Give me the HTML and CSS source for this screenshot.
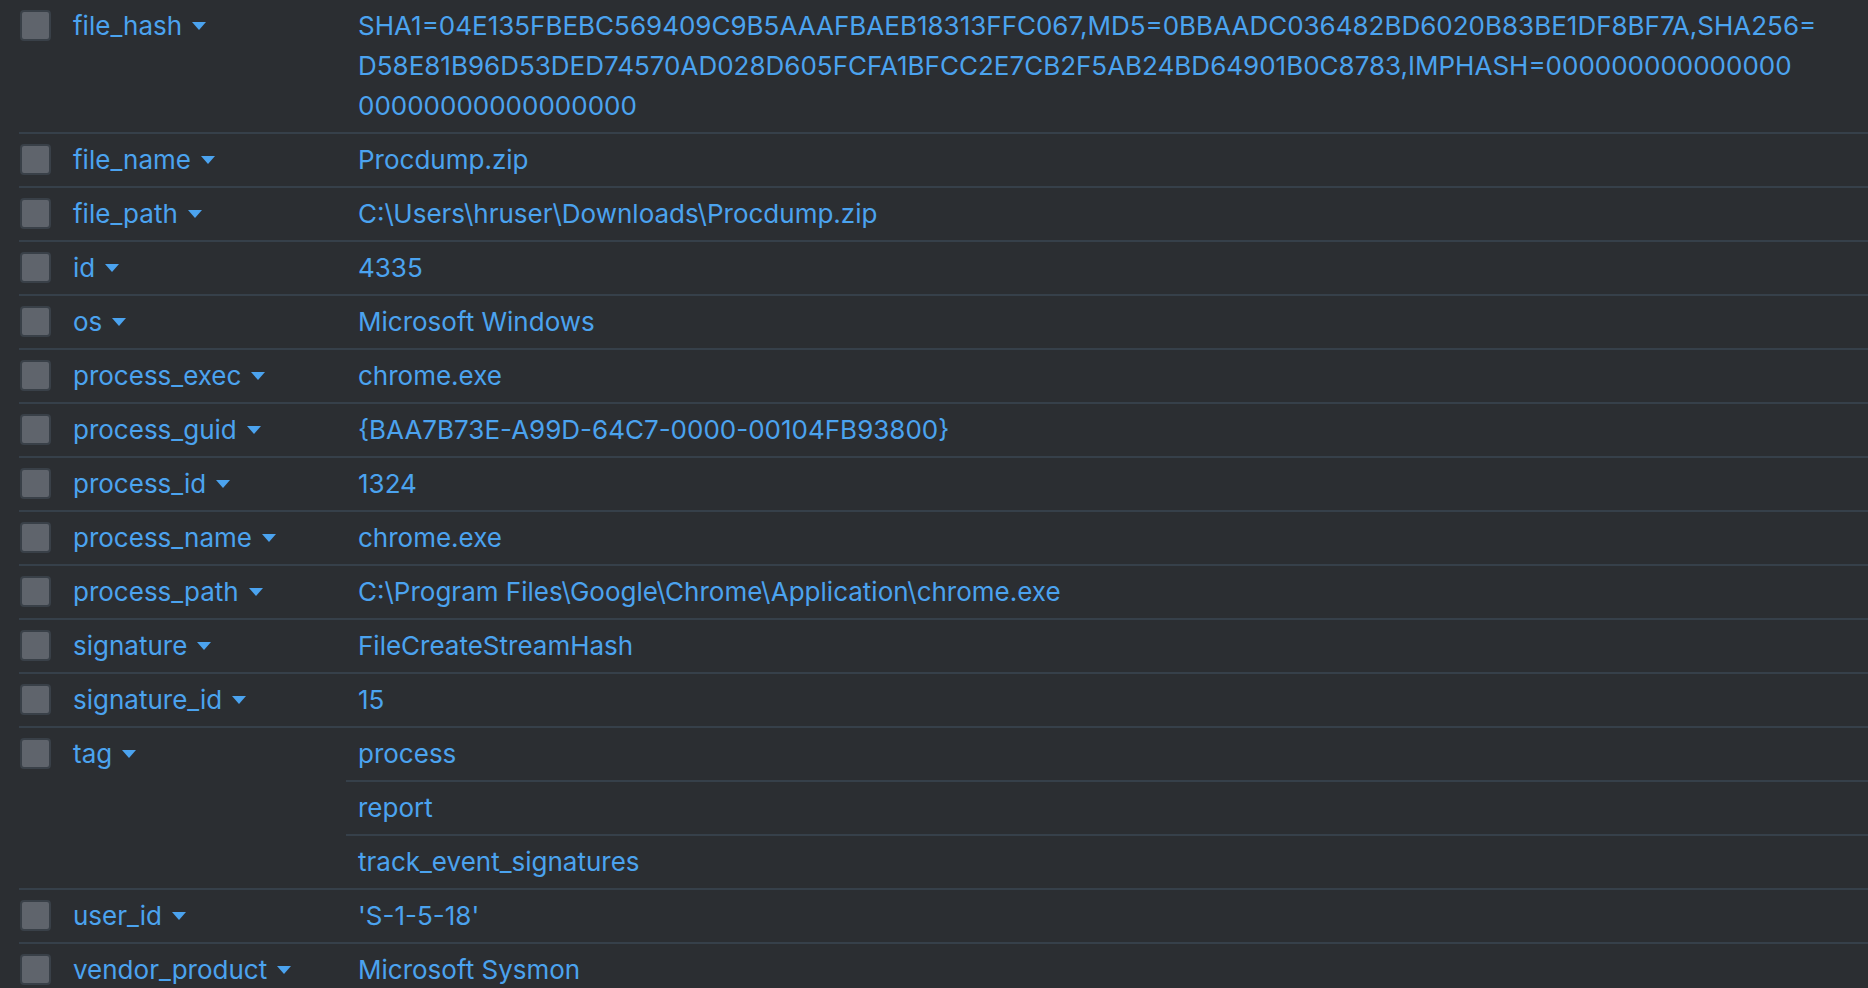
FILE: index.html
```html
<!DOCTYPE html>
<html>
<head>
<meta charset="utf-8">
<link rel="stylesheet" href="styles.css">
</head>
<body>
<div class="fields">
  <div class="row">
    <div class="key"><span class="cb"></span><span class="name">file_hash</span><span class="caret"></span></div>
    <div class="vals"><div class="val hash">SHA1=04E135FBEBC569409C9B5AAAFBAEB18313FFC067,MD5=0BBAADC036482BD6020B83BE1DF8BF7A,SHA256=<br>D58E81B96D53DED74570AD028D605FCFA1BFCC2E7CB2F5AB24BD64901B0C8783,IMPHASH=000000000000000<br>00000000000000000</div></div>
  </div>
  <div class="row">
    <div class="key"><span class="cb"></span><span class="name">file_name</span><span class="caret"></span></div>
    <div class="vals"><div class="val">Procdump.zip</div></div>
  </div>
  <div class="row">
    <div class="key"><span class="cb"></span><span class="name">file_path</span><span class="caret"></span></div>
    <div class="vals"><div class="val">C:\Users\hruser\Downloads\Procdump.zip</div></div>
  </div>
  <div class="row">
    <div class="key"><span class="cb"></span><span class="name">id</span><span class="caret"></span></div>
    <div class="vals"><div class="val">4335</div></div>
  </div>
  <div class="row">
    <div class="key"><span class="cb"></span><span class="name">os</span><span class="caret"></span></div>
    <div class="vals"><div class="val">Microsoft Windows</div></div>
  </div>
  <div class="row">
    <div class="key"><span class="cb"></span><span class="name">process_exec</span><span class="caret"></span></div>
    <div class="vals"><div class="val">chrome.exe</div></div>
  </div>
  <div class="row">
    <div class="key"><span class="cb"></span><span class="name">process_guid</span><span class="caret"></span></div>
    <div class="vals"><div class="val">{BAA7B73E-A99D-64C7-0000-00104FB93800}</div></div>
  </div>
  <div class="row">
    <div class="key"><span class="cb"></span><span class="name">process_id</span><span class="caret"></span></div>
    <div class="vals"><div class="val">1324</div></div>
  </div>
  <div class="row">
    <div class="key"><span class="cb"></span><span class="name">process_name</span><span class="caret"></span></div>
    <div class="vals"><div class="val">chrome.exe</div></div>
  </div>
  <div class="row">
    <div class="key"><span class="cb"></span><span class="name">process_path</span><span class="caret"></span></div>
    <div class="vals"><div class="val">C:\Program Files\Google\Chrome\Application\chrome.exe</div></div>
  </div>
  <div class="row">
    <div class="key"><span class="cb"></span><span class="name">signature</span><span class="caret"></span></div>
    <div class="vals"><div class="val">FileCreateStreamHash</div></div>
  </div>
  <div class="row">
    <div class="key"><span class="cb"></span><span class="name">signature_id</span><span class="caret"></span></div>
    <div class="vals"><div class="val">15</div></div>
  </div>
  <div class="row">
    <div class="key"><span class="cb"></span><span class="name">tag</span><span class="caret"></span></div>
    <div class="vals"><div class="val">process</div><div class="val">report</div><div class="val">track_event_signatures</div></div>
  </div>
  <div class="row">
    <div class="key"><span class="cb"></span><span class="name">user_id</span><span class="caret"></span></div>
    <div class="vals"><div class="val">'S-1-5-18'</div></div>
  </div>
  <div class="row">
    <div class="key"><span class="cb"></span><span class="name">vendor_product</span><span class="caret"></span></div>
    <div class="vals"><div class="val">Microsoft Sysmon</div></div>
  </div>
</div>
</body>
</html>
```
FILE: styles.css
```css
html, body {
  margin: 0;
  padding: 0;
  background: #2b2e32;
  height: 100%;
  overflow: hidden;
}
body {
  font-family: "Inter", "Liberation Sans", sans-serif;
  font-size: 26px;
  color: #4ba3ef;
}
.fields {
  margin-left: 19px;
}
.row {
  display: grid;
  grid-template-columns: 327px 1fr;
  border-bottom: 2px solid #36404a;
}
.key {
  display: flex;
  align-items: flex-start;
  padding: 6px 0;
  line-height: 40px;
}
.cb {
  flex: none;
  width: 27px;
  height: 27px;
  margin-top: 4px;
  margin-left: 1px;
  background: #5f646c;
  border: 2px solid #394048;
  border-radius: 4px;
}
.name {
  margin-left: 22px;
  white-space: nowrap;
}
.caret {
  flex: none;
  width: 0;
  height: 0;
  margin-left: 10px;
  margin-top: 16px;
  border-left: 7px solid transparent;
  border-right: 7px solid transparent;
  border-top: 8px solid #4ba3ef;
}
.vals {
  display: flex;
  flex-direction: column;
}
.val {
  padding: 6px 12px;
  line-height: 40px;
  white-space: nowrap;
}
.val + .val {
  border-top: 2px solid #36404a;
}
```
